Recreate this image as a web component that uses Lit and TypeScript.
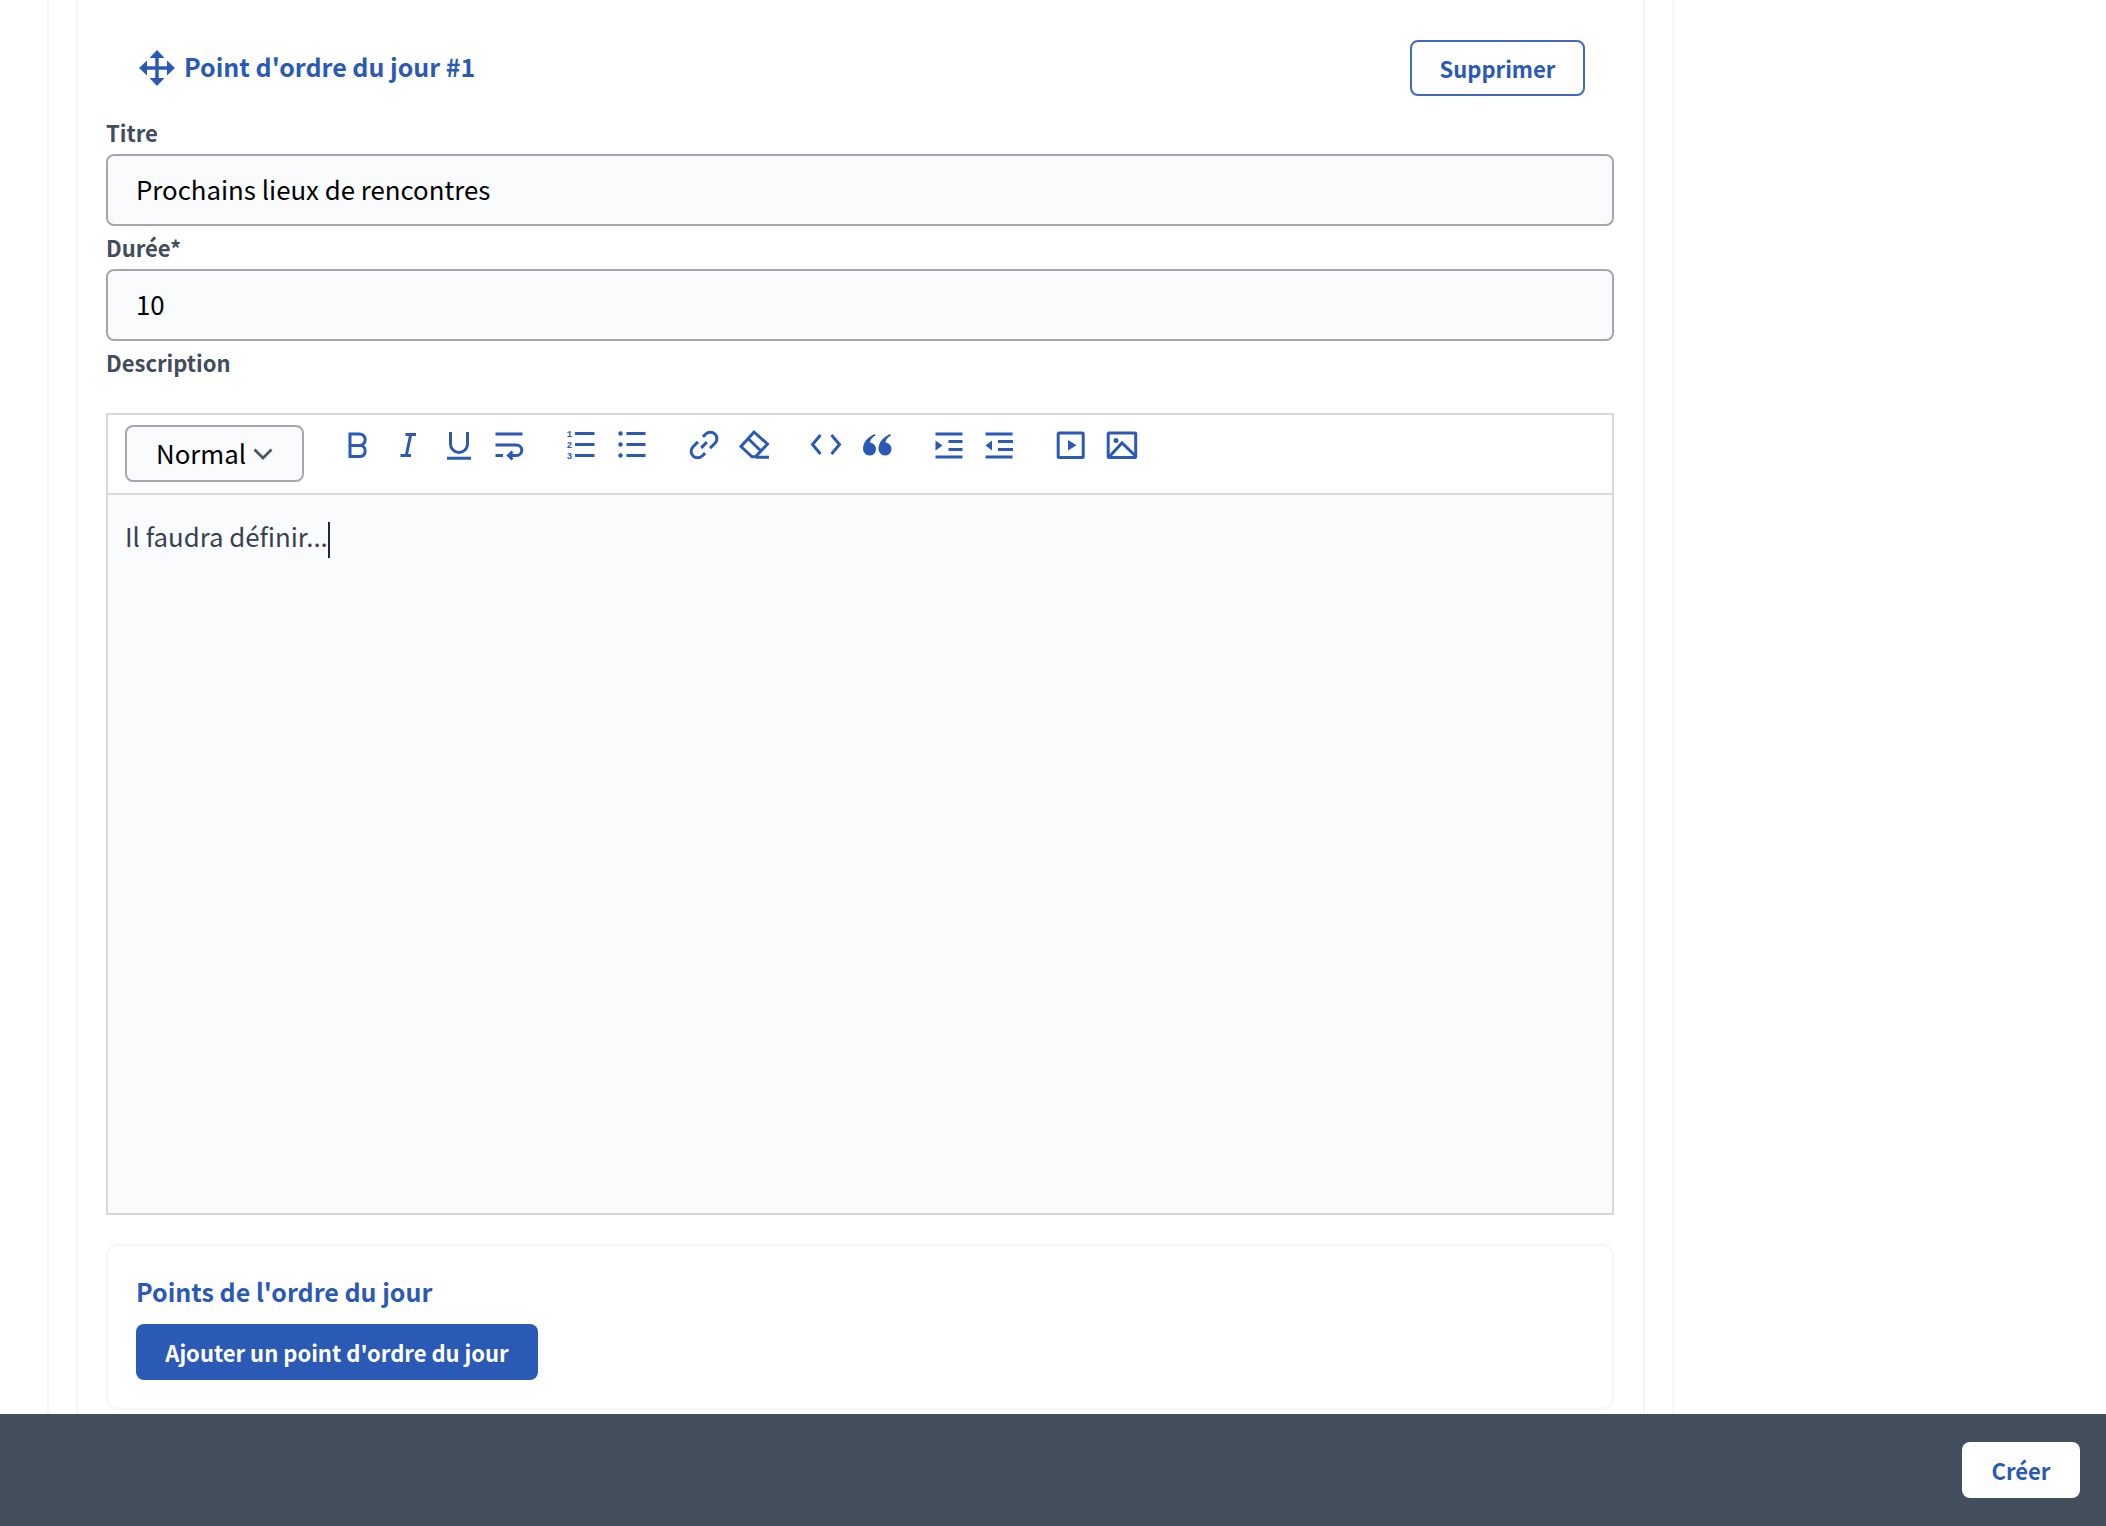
import { LitElement, html, css, svg } from "lit";
import { customElement } from "lit/decorators.js";

const icon = (body: unknown) => html`<span class="tool"><svg viewBox="0 0 32 32" width="32" height="32">${body}</svg></span>`;

const groups = [
  [
    svg`<path d="M8 5h9.500a5.700 5.700 0 0 1 0 11.400H8zM8 16.400h10.500a5.700 5.700 0 0 1 0 11.200H8z"/>`,
    svg`<path d="M13.500 5.500H24M8.500 26.500H19M18.700 5.500l-4.400 21"/>`,
    svg`<path d="M7.500 3v12a8.500 8.500 0 0 0 17 0V3M4 29.200h24"/>`,
    svg`<path d="M2.500 5h27M2.500 16H23.500a5.200 5.200 0 0 1 0 10.600H16M2.500 26.600H10M19.500 22.500l-4 4 4 4"/>`,
  ],
  [
    svg`<path d="M10 4.500h19.500M10 15.500h19.500M10 26.500h19.500"/><text class="num" x="4.500" y="7.500">1</text><text class="num" x="4.500" y="18.500">2</text><text class="num" x="4.500" y="29.500">3</text>`,
    svg`<path d="M10.500 4.500h19M10.500 15.500h19M10.500 26.500h19"/><circle class="fill" cx="4.500" cy="4.500" r="2.200"/><circle class="fill" cx="4.500" cy="15.500" r="2.200"/><circle class="fill" cx="4.500" cy="26.500" r="2.200"/>`,
  ],
  [
    svg`<g transform="rotate(-45 16 16)"><path d="M14 9.500H7a6.500 6.500 0 0 0 0 13H11M18 22.500h7a6.500 6.500 0 0 0 0-13H21M12 16h8"/></g>`,
    svg`<path d="M16 3l13.500 12-12 12.800H14L3 17.500zM10 9.500L23 22M18 28.200h13"/>`,
  ],
  [
    svg`<path d="M10.500 6L2.500 15.500l8 9.500M21.500 6l8 9.500-8 9.500"/>`,
    svg`<path class="fill" d="M13.500 5C7 8 2 13 2 20a6.500 6.500 0 1 0 7-6.400c.3-3 2-5 5.500-7zM29 5c-6.500 3-11.500 8-11.500 15a6.500 6.500 0 1 0 7-6.400c.3-3 2-5 5.500-7z"/>`,
  ],
  [
    svg`<path d="M2.500 5h27M15.500 12.500h14M15.500 20.500h14M2.500 28h27"/><path class="fill" d="M2.500 11.500l7 5-7 5z"/>`,
    svg`<path d="M2.500 5h27M15 12.500h15M15 20.500h15M2.500 28h27"/><path class="fill" d="M9 11.500l-6.500 5 6.500 5z"/>`,
  ],
  [
    svg`<rect x="3.200" y="4" width="25" height="24.500" rx="1"/><path class="fill" d="M13 11l8.500 5.200-8.500 5.300z"/>`,
    svg`<rect x="2.200" y="4" width="27.500" height="24.500" rx="1"/><circle class="fill" cx="10" cy="11.500" r="2.500"/><path d="M3.500 27.500L16 14l13.500 13"/>`,
  ],
];

@customElement("app-root")
export class AppRoot extends LitElement {
  static styles = css`
    :host {
      display: block;
      height: 1526px;
      overflow: hidden;
      font-family: "Noto Sans CJK SC", "Noto Sans CJK JP", "Noto Sans", sans-serif;
      background: #fff;
    }
    .page { height: 1526px; display: flex; flex-direction: column; }
    .main { flex: 1; min-height: 0; overflow: hidden; padding-left: 47px; }
    .outer {
      width: 1627px;
      height: 100%;
      box-sizing: border-box;
      border-left: 2px solid #f5f6f8;
      border-right: 2px solid #f5f6f8;
      padding: 0 27px;
    }
    .inner {
      height: 100%;
      box-sizing: border-box;
      width: 1569px;
      border-left: 2px solid #f5f6f8;
      border-right: 2px solid #f5f6f8;
      padding: 0 29px 0 28px;
    }
    .head {
      display: flex;
      justify-content: space-between;
      align-items: center;
      padding: 40px 29px 0 33px;
      height: 56px;
    }
    .head-title { display: flex; align-items: center; gap: 9px; }
    .head-title svg { fill: #2b59b6; stroke: #2b59b6; display: block; }
    .title { font-size: 25px; font-weight: 600; color: #2b59b6; line-height: 36px; }
    .head-title .title { margin-bottom: 5px; }
    .btn {
      box-sizing: border-box;
      height: 56px;
      display: flex;
      align-items: center;
      justify-content: center;
      border-radius: 8px;
      font-size: 22px;
      font-weight: 600;
      line-height: 32px;
      padding-bottom: 1px;
    }
    .outline { width: 175px; border: 2px solid #4169c0; color: #2b59b6; background: #fff; }
    .primary { width: 402px; background: #2b59b6; color: #fff; }
    .white { width: 118px; background: #fff; color: #2b59b6; }
    .label { font-size: 22px; font-weight: 600; color: #414d5c; line-height: 36px; }
    .label.first { margin-top: 18px; margin-bottom: 4px; }
    .label.second { margin-top: 3px; margin-bottom: 4px; }
    .label.third { margin-top: 3px; margin-bottom: 33px; }
    .input {
      box-sizing: border-box;
      height: 72px;
      border: 2px solid #a4a7b2;
      border-radius: 8px;
      background: #fafbfc;
      padding: 0 28px;
      font-size: 25.800px;
      line-height: 66px;
      color: #000;
    }
    .editor {
      box-sizing: border-box;
      height: 802px;
      border: 2px solid #d8d8d8;
      display: flex;
      flex-direction: column;
    }
    .toolbar {
      box-sizing: border-box;
      height: 80px;
      flex: none;
      border-bottom: 2px solid #d8d8d8;
      padding: 10px 0 0 17px;
      display: flex;
      align-items: flex-start;
      background: #fff;
    }
    .select {
      box-sizing: border-box;
      width: 179px;
      height: 57px;
      border: 2px solid #a4a7b2;
      border-radius: 8px;
      background: #fafbfc;
      display: flex;
      align-items: center;
      justify-content: center;
      gap: 7px;
      font-size: 25.800px;
      color: #000;
      margin-right: 28.500px;
      padding-bottom: 3px;
    }
    .select svg { fill: none; stroke: #4b5563; stroke-width: 2.800; display: block; margin-top: 4px; }
    .group { display: flex; margin-right: 21.500px; margin-top: 4px; }
    .tool { flex: none; width: 50.500px; height: 32px; display: flex; justify-content: center; }
    .tool svg { display: block; fill: none; stroke: #2b59b6; stroke-width: 3; overflow: visible; }
    .tool svg .fill { fill: #2b59b6; stroke: none; }
    .tool svg .num {
      fill: #2b59b6;
      stroke: none;
      font: 700 9px "Liberation Mono", monospace;
      text-anchor: middle;
    }
    .body {
      flex: 1;
      background: #fafbfc;
      padding: 21px 17px;
      font-size: 25.800px;
      line-height: 40px;
      color: #374151;
    }
    .caret {
      display: inline-block;
      width: 2px;
      height: 36px;
      background: #1f2937;
      vertical-align: middle;
      margin-left: 0;
    }
    .card {
      box-sizing: border-box;
      margin-top: 29px;
      height: 166px;
      border: 2px solid #f5f6f8;
      border-radius: 12px;
      padding: 27px 28px 0;
    }
    .card .title { margin-bottom: 15px; }
    .footer {
      flex: none;
      height: 112px;
      box-sizing: border-box;
      background: #424e5c;
      display: flex;
      justify-content: flex-end;
      align-items: center;
      padding: 0 26px 0 0;
    }
  `;

  render() {
    return html`<div class="page">
      <div class="main">
        <div class="outer">
          <div class="inner">
            <div class="head">
              <div class="head-title">
                <svg viewBox="0 0 36 36" width="36" height="36">
                  <path stroke-width="3.500" d="M18 6v24M6 18h24" />
                  <path stroke="none" d="M18 0l7.500 8h-15zM18 36l-7.500-8h15zM0 18l8-7.500v15zM36 18l-8 7.500v-15z" />
                </svg>
                <span class="title">Point d'ordre du jour #1</span>
              </div>
              <div class="btn outline">Supprimer</div>
            </div>
            <div class="label first">Titre</div>
            <div class="input">Prochains lieux de rencontres</div>
            <div class="label second">Durée*</div>
            <div class="input">10</div>
            <div class="label third">Description</div>
            <div class="editor">
              <div class="toolbar">
                <div class="select">
                  Normal
                  <svg viewBox="0 0 20 12" width="20" height="12"><path d="M1.500 1.500L10 10l8.500-8.500" /></svg>
                </div>
                ${groups.map((g) => html`<div class="group">${g.map((b) => icon(b))}</div>`)}
              </div>
              <div class="body">Il faudra définir...<span class="caret"></span></div>
            </div>
            <div class="card">
              <div class="title">Points de l'ordre du jour</div>
              <div class="btn primary">Ajouter un point d'ordre du jour</div>
            </div>
          </div>
        </div>
      </div>
      <div class="footer"><div class="btn white">Créer</div></div>
    </div>`;
  }
}
